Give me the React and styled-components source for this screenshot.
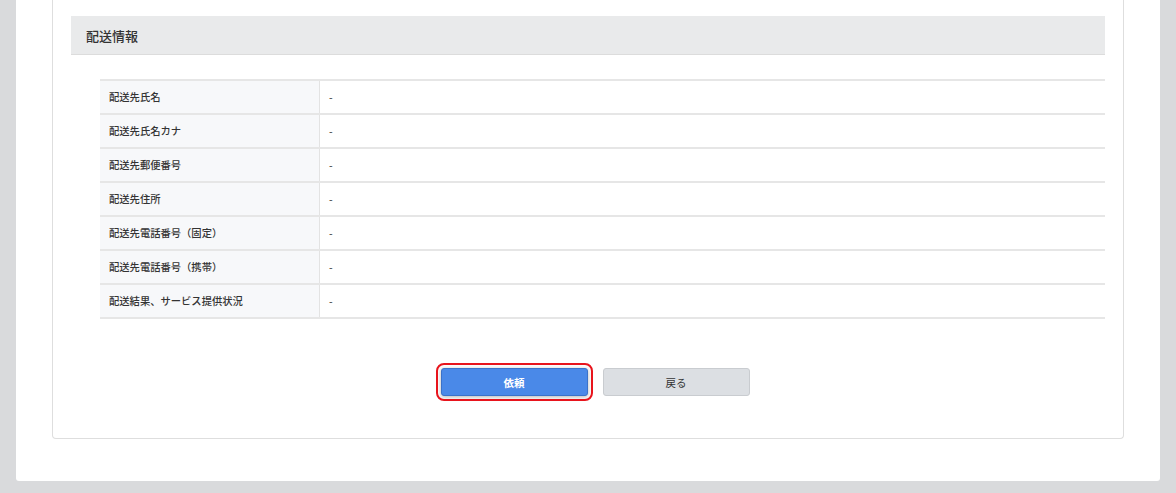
import styled, { createGlobalStyle } from "styled-components";

const GlobalStyle = createGlobalStyle`
  html, body {
    margin: 0;
    padding: 0;
    background: #d9dadc;
  }
  body {
    font-family: "Noto Sans CJK JP", "Noto Sans", sans-serif;
    color: #333333;
  }
`;

const Page = styled.div`
  width: 1176px;
  padding: 0 16px 12px 16px;
  box-sizing: border-box;
`;

const Panel = styled.section`
  background: #ffffff;
  border-radius: 0 0 3px 3px;
  padding: 0 36px 42px 36px;
  box-sizing: border-box;
`;

const Card = styled.div`
  border: 1px solid #dedede;
  border-top: none;
  border-radius: 0 0 4px 4px;
  padding: 16px 18px 42px 18px;
`;

const SectionHead = styled.div`
  background: #e9eaeb;
  border-bottom: 1px solid #dcdcdc;
  height: 38px;
  display: flex;
  align-items: center;
  padding-left: 15px;
`;

const SectionTitle = styled.h2`
  margin: 0;
  font-size: 13px;
  font-weight: 500;
  color: #333333;
`;

const Table = styled.div`
  margin: 24px 0 0 29px;
  border-top: 2px solid #e6e6e6;
`;

const Row = styled.div`
  display: grid;
  grid-template-columns: 220px 1fr;
  height: 32px;
  border-bottom: 2px solid #e6e6e6;
`;

const Label = styled.div`
  background: #f7f8fa;
  border-right: 1px solid #e3e3e3;
  display: flex;
  align-items: center;
  padding: 0 0 1px 9px;
  font-size: 10.3px;
  font-weight: 500;
`;

const Value = styled.div`
  display: flex;
  align-items: center;
  padding: 0 0 1px 9px;
  font-size: 10.5px;
`;

const Actions = styled.div`
  display: flex;
  justify-content: center;
  gap: 15px;
  margin-top: 49px;
  padding-left: 14px;
`;

const Button = styled.button`
  width: 147px;
  height: 28px;
  border-radius: 3px;
  font-family: inherit;
  font-size: 10.5px;
  cursor: pointer;
  border: 1px solid ${(p) => (p.$primary ? "#3b72c9" : "#c9ccd0")};
  background: ${(p) => (p.$primary ? "#4a89e8" : "#dcdfe3")};
  color: ${(p) => (p.$primary ? "#ffffff" : "#333333")};
  font-weight: ${(p) => (p.$primary ? 700 : 400)};
  ${(p) =>
    p.$focused &&
    `
    outline: 2px solid #e8141c;
    outline-offset: 3px;
    box-shadow: 0 1px 4px rgba(0, 0, 0, 0.3);
  `}
`;

const rows = [
  "配送先氏名",
  "配送先氏名カナ",
  "配送先郵便番号",
  "配送先住所",
  "配送先電話番号（固定）",
  "配送先電話番号（携帯）",
  "配送結果、サービス提供状況",
];

export default function App() {
  return (
    <>
      <GlobalStyle />
      <Page>
        <Panel>
          <Card>
            <SectionHead>
              <SectionTitle>配送情報</SectionTitle>
            </SectionHead>
            <Table>
              {rows.map((label) => (
                <Row key={label}>
                  <Label>{label}</Label>
                  <Value>-</Value>
                </Row>
              ))}
            </Table>
            <Actions>
              <Button $primary $focused>依頼</Button>
              <Button>戻る</Button>
            </Actions>
          </Card>
        </Panel>
      </Page>
    </>
  );
}
